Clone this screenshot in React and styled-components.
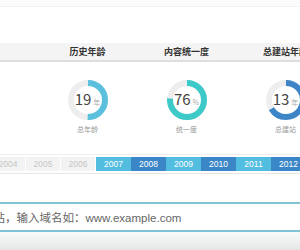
import styled, { createGlobalStyle } from "styled-components";

const GlobalStyle = createGlobalStyle`
  html, body {
    margin: 0;
    padding: 0;
    background: #fff;
    overflow: hidden;
  }
  body {
    width: 300px;
    height: 250px;
    font-family: "Noto Sans CJK SC", "Liberation Sans", sans-serif;
  }
`;

const Page = styled.div`
  width: 300px;
  height: 250px;
  overflow: hidden;
  display: flex;
  flex-direction: column;
`;

const TopStrip = styled.div`
  height: 6px;
  background: #fbfbfb;
  border-bottom: 1px solid #f1f1f1;
`;

const Stats = styled.div`
  margin: 36px 0 0 -61px;
  width: 396px;
`;

const HeadRow = styled.div`
  display: grid;
  grid-template-columns: repeat(4, 99px);
  height: 17px;
  background: #f4f4f4;
  border-bottom: 2px solid #dedede;
`;

const HeadCell = styled.div`
  font-size: 9px;
  line-height: 17px;
  font-weight: 600;
  color: #333;
  text-align: center;
  white-space: nowrap;
`;

const DonutRow = styled.div`
  display: grid;
  grid-template-columns: repeat(4, 99px);
  padding-top: 18px;
`;

const DonutCell = styled.div`
  display: flex;
  flex-direction: column;
  align-items: center;
`;

const Donut = styled.div`
  position: relative;
  width: 40px;
  height: 40px;
`;

const DonutValue = styled.div`
  position: absolute;
  inset: 0;
  display: flex;
  align-items: baseline;
  justify-content: center;
  padding-top: 9px;
  box-sizing: border-box;
  color: #444;
  font-size: 15px;
  line-height: 20px;
`;

const Unit = styled.span`
  font-size: 7px;
  color: #aaa;
  margin-left: 2px;
`;

const DonutLabel = styled.div`
  margin-top: 4px;
  font-size: 7px;
  line-height: 10px;
  color: #999;
`;

const YearBar = styled.div`
  margin: 20px 0 0 -9px;
  padding: 2px 0;
  border-top: 1px solid #eeeeee;
  border-bottom: 1px solid #e6e6e6;
  display: flex;
`;

const Year = styled.div`
  flex: 0 0 35px;
  height: 14px;
  line-height: 14px;
  font-size: 8.5px;
  text-align: center;
  font-family: "Liberation Sans", sans-serif;
  color: ${(p) => (p.$tone ? "#fff" : "#c6c6c6")};
  background: ${(p) =>
    p.$tone === "light" ? "#52bddf" : p.$tone === "dark" ? "#3b86c6" : "#f3f3f3"};
  border-right: ${(p) => (p.$tone ? "none" : "1px solid #fff")};
  box-sizing: border-box;
`;

const Search = styled.div`
  margin-top: 28px;
  height: 30px;
  border-top: 2px solid #7fc4d4;
  border-bottom: 2px solid #7fc4d4;
  box-sizing: border-box;
  background: #fff;
  display: flex;
  align-items: center;
`;

const SearchText = styled.div`
  margin-left: -18px;
  font-family: "Liberation Sans", "Noto Sans CJK SC", sans-serif;
  font-size: 11.5px;
  color: #666;
  white-space: nowrap;
`;

const Shade = styled.div`
  flex: 1;
  background: linear-gradient(#f9fbfb, #e5e5e5);
`;

const RING = 2 * Math.PI * 17;

const Ring = ({ value, color }) => (
  <svg width="40" height="40" viewBox="0 0 40 40">
    <circle cx="20" cy="20" r="17" fill="none" stroke="#eeeeee" strokeWidth="6" />
    <circle
      cx="20"
      cy="20"
      r="17"
      fill="none"
      stroke={color}
      strokeWidth="6"
      strokeDasharray={`${RING * value} ${RING}`}
      transform="rotate(-90 20 20)"
    />
  </svg>
);

const stats = [
  { title: "历史年龄", num: "19", unit: "年", label: "总年龄", value: 0.5, color: "#5bc0de" },
  { title: "内容统一度", num: "76", unit: "%", label: "统一度", value: 0.76, color: "#3ec9c9" },
  { title: "总建站年龄", num: "13", unit: "年", label: "总建站", value: 0.66, color: "#3d85c6" },
];

const years = [
  [2004], [2005], [2006],
  [2007, "light"], [2008, "dark"], [2009, "light"],
  [2010, "dark"], [2011, "light"], [2012, "dark"],
];

export default function App() {
  return (
    <Page>
      <GlobalStyle />
      <TopStrip />
      <Stats>
        <HeadRow>
          <HeadCell />
          {stats.map((s) => (
            <HeadCell key={s.title}>{s.title}</HeadCell>
          ))}
        </HeadRow>
        <DonutRow>
          <DonutCell />
          {stats.map((s) => (
            <DonutCell key={s.title}>
              <Donut>
                <Ring value={s.value} color={s.color} />
                <DonutValue>
                  {s.num}
                  <Unit>{s.unit}</Unit>
                </DonutValue>
              </Donut>
              <DonutLabel>{s.label}</DonutLabel>
            </DonutCell>
          ))}
        </DonutRow>
      </Stats>
      <YearBar>
        {years.map(([y, tone]) => (
          <Year key={y} $tone={tone}>
            {y}
          </Year>
        ))}
      </YearBar>
      <Search>
        <SearchText>网站，输入域名如：www.example.com</SearchText>
      </Search>
      <Shade />
    </Page>
  );
}
